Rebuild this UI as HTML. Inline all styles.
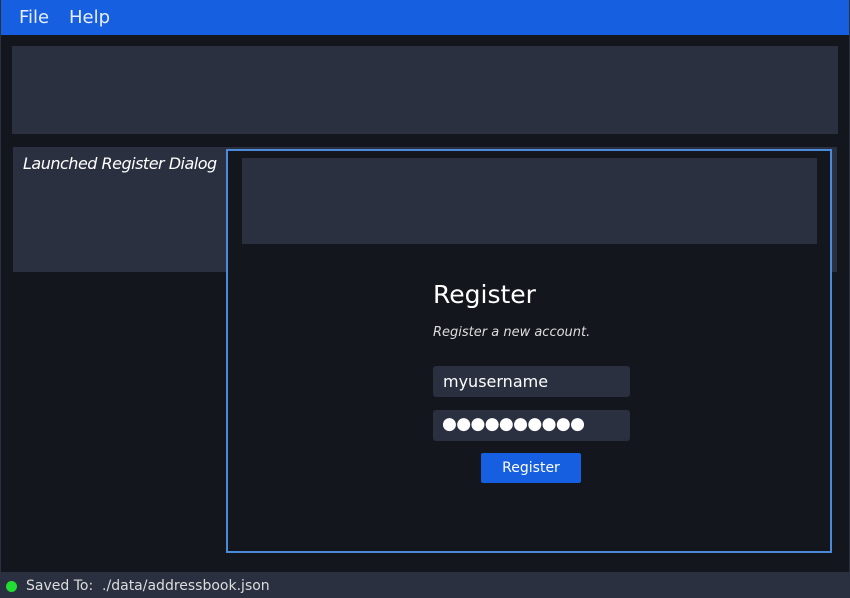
<!DOCTYPE html>
<html><head><style>
body{margin:0;width:850px;height:598px;background:#13161c;font-family:"DejaVu Sans","Liberation Sans",sans-serif;position:relative;overflow:hidden;color:#fff}
div{position:absolute;box-sizing:border-box}
.p{background:#2a303f}
</style></head><body>
<div style="left:0;top:0;width:850px;height:598px;border:1px solid #2a303f;border-top:none"></div>
<div style="left:1px;top:0;width:848px;height:35px;background:#155fe0"></div>
<div style="left:19px;top:7px;font-size:18px;color:#e8eefc">File</div>
<div style="left:69px;top:7px;font-size:18px;color:#e8eefc">Help</div>
<div class="p" style="left:12px;top:46px;width:826px;height:88px"></div>
<div class="p" style="left:13px;top:147px;width:824px;height:125px"></div>
<div style="left:23px;top:154px;font-size:16px;font-style:italic;color:#fff;letter-spacing:-0.5px">Launched Register Dialog</div>
<div style="left:226px;top:149px;width:606px;height:404px;background:#13161c;border:2px solid #4a8ad8"></div>
<div class="p" style="left:242px;top:158px;width:575px;height:86px"></div>
<div style="left:433px;top:280px;font-size:25px">Register</div>
<div style="left:433px;top:325px;font-size:13px;font-style:italic;color:#ddd">Register a new account.</div>
<div class="p" style="left:433px;top:366px;width:197px;height:31px;border-radius:3px;padding:6px 0 0 10px;font-size:16px">myusername</div>
<div class="p" style="left:433px;top:410px;width:197px;height:31px;border-radius:3px;padding:4px 0 0 9px;font-size:17px;letter-spacing:-0.6px">●●●●●●●●●●</div>
<div style="left:481px;top:453px;width:100px;height:30px;background:#155fe0;border-radius:2px;text-align:center;line-height:31px;font-size:14px">Register</div>
<div class="p" style="left:0;top:572px;width:850px;height:26px"></div>
<div style="left:6px;top:581px;width:11px;height:11px;border-radius:50%;background:#22dd33"></div>
<div style="left:26px;top:578px;font-size:14px;color:#ddd">Saved To:&nbsp; ./data/addressbook.json</div>
</body></html>
